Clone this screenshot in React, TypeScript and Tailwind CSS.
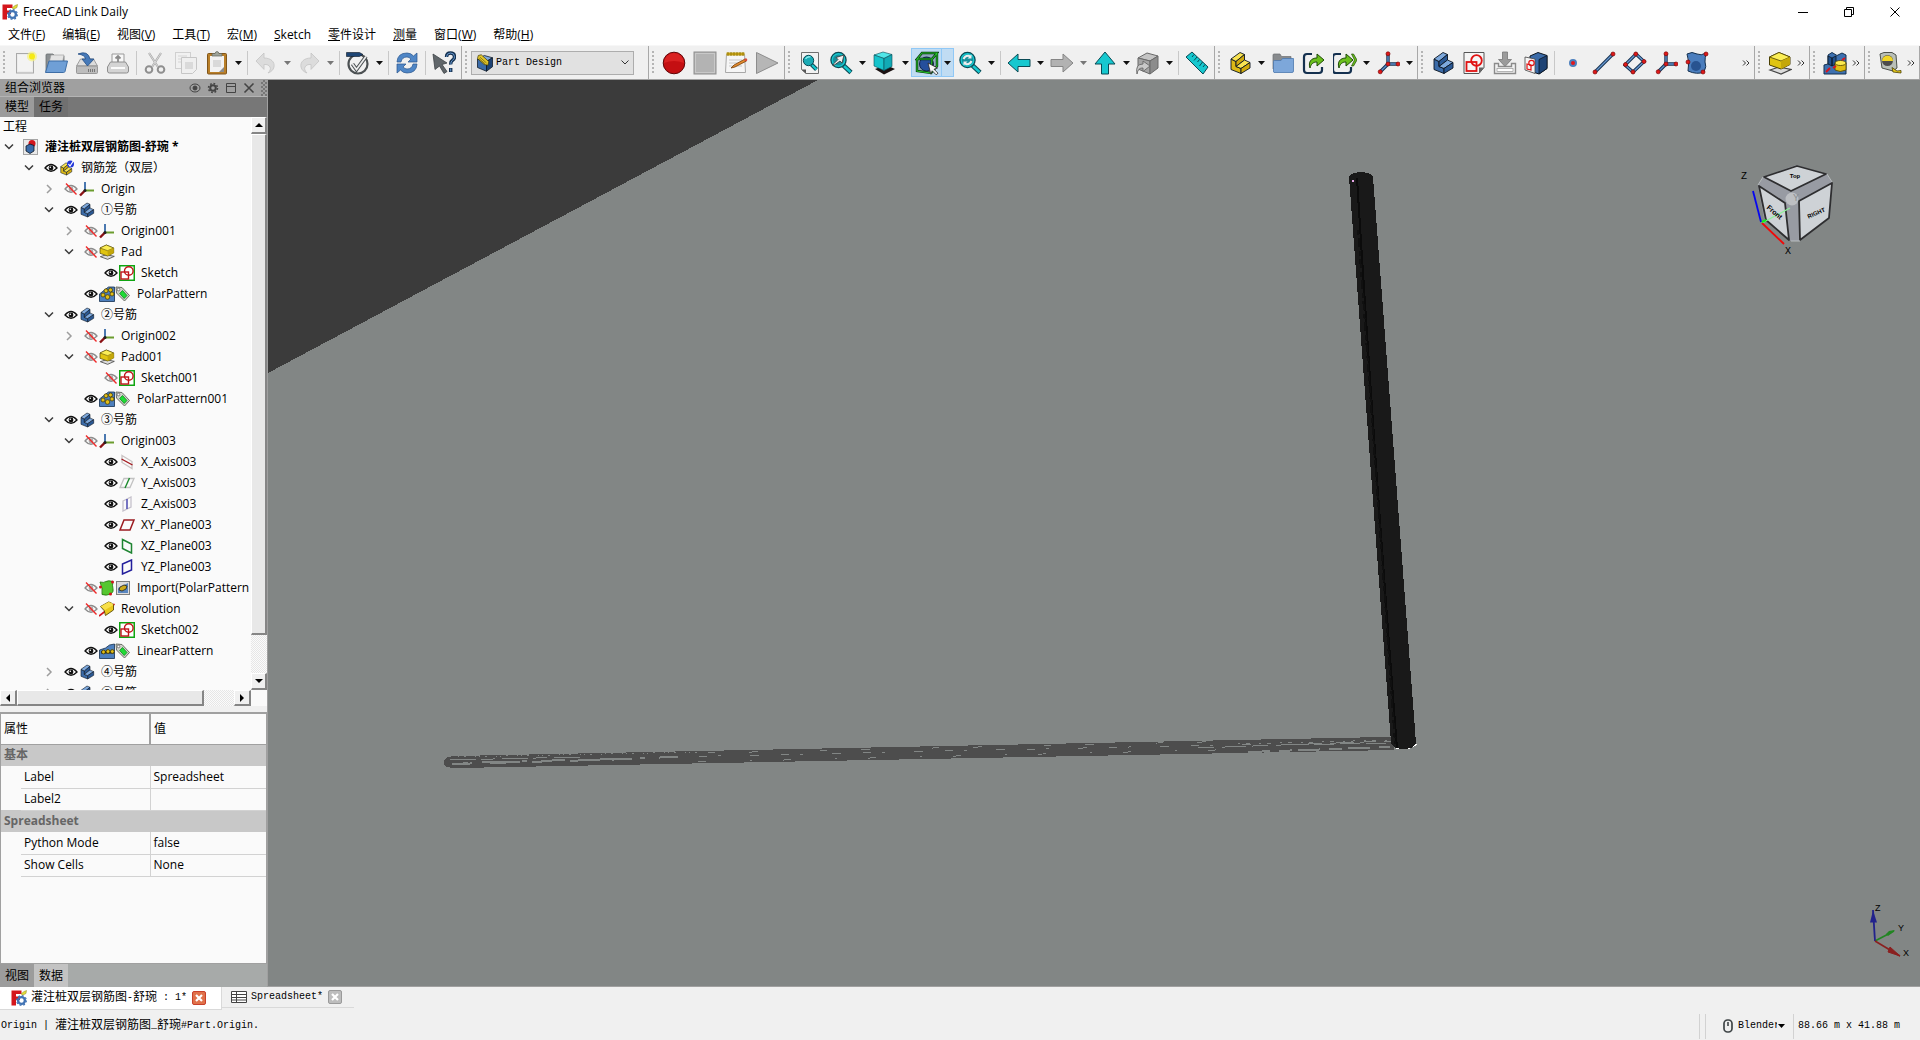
import { useState, type ReactNode } from "react";
import clsx from "clsx";

type IconName = keyof typeof ICONS;

const DARK = "#0b1521";
const NAVY = "#14304f";
const BLUE = "#3b6ba8";
const TEAL = "#16c8cf";
const TEAL_EDGE = "#0a4a55";

/* ── Toolbar icons, 24 x 24 ───────────────────────────────────────── */

const axes = (
    <>
        <path d="M12 13V3M12 13h10M12 13L4 21" stroke={NAVY} strokeWidth="3.4" fill="none" />
        <path d="M12 13V3M12 13h10M12 13L4 21" stroke="#5d8fca" strokeWidth="1.4" fill="none" />
        <g fill="#e01818" stroke="#7c0a0a" strokeWidth=".7">
            <circle cx="12" cy="2.8" r="2" />
            <circle cx="12" cy="13" r="2" />
            <circle cx="22" cy="13" r="2" />
            <circle cx="4.2" cy="20.8" r="2" />
        </g>
    </>
);

const lens = (
    <>
        <path d="M14.5 14.5l7.5 7" stroke={TEAL_EDGE} strokeWidth="4.6" />
        <path d="M15 15l6.6 6.1" stroke={TEAL} strokeWidth="2.6" />
        <circle cx="9.5" cy="9" r="7.6" fill={TEAL} stroke={TEAL_EDGE} strokeWidth="1.3" />
        <circle cx="9.5" cy="9" r="5.6" fill="#178f9c" />
    </>
);

const undo = (
    <path
        d="M2 10l8-8v5c7 0 11 4 10 9-.6 3-3 5-6 6 2-2 3-4 2-6-1-2-3-2.600-6-2.600v5z"
        fill="#dcdcdc"
        stroke="#c4c4c4"
        strokeWidth=".8"
    />
);

const partBlock = (light: string, mid: string, dark: string) => (
    <g stroke={DARK} strokeWidth=".9" strokeLinejoin="round">
        <path d="M3 8l5 2.500v5l5 2V22.500l-10-4z" fill={mid} />
        <path d="M3 8l9-6.500 4.500 2L8 10.500z" fill={light} />
        <path d="M8 10.500l8.500-7V9L8 15.500z" fill={dark} />
        <path d="M8 15.500L16.500 9l5.500 2.500-9 6z" fill={light} />
        <path d="M13 17.500l9-6V17l-9 5.500z" fill={dark} />
    </g>
);

const cube = (top: string, left: string, right: string, edge: string) => (
    <g stroke={edge} strokeWidth="1" strokeLinejoin="round">
        <path d="M2 7l9-5 11 3-8 5z" fill={top} />
        <path d="M2 7l12 3v13L2 18z" fill={left} />
        <path d="M14 10l8-5v12l-8 6z" fill={right} />
    </g>
);

const linkBox = <path d="M10 3H5Q2 3 2 6v13q0 3 3 3h12q3 0 3-3v-3" fill="none" stroke={NAVY} strokeWidth="2.200" />;

const greenArrow = (
    <path
        d="M8 17c-2-6 1-10 7-10V3l7 6-7 6v-4c-4 0-6 2-7 6z"
        fill="#6bbf1d"
        stroke="#1d4a06"
        strokeWidth="1"
        strokeLinejoin="round"
    />
);

const ICONS = {
    fileNew: (
        <>
            <rect x="3.500" y="2.500" width="17" height="19.500" fill="#ececec" stroke="#a9a9a9" />
            <path d="M5 4h14v16H5z" fill="#f3f3f3" />
            <circle cx="19" cy="5.500" r="5" fill="#f7f27a" opacity=".7" />
            <circle cx="19" cy="5.500" r="3" fill="#f6ea16" />
        </>
    ),
    open: (
        <>
            <path d="M2 21V4q0-1 1-1h6l2 2h9v14z" fill="#8b8f92" stroke="#6b6f72" strokeWidth=".8" />
            <path d="M5 12l2-8h13l-2 10z" fill="#e4e4e4" stroke="#999" strokeWidth=".6" />
            <path d="M1.500 21.500L5 10h18.500L21 20.500q-.4 1-1.500 1z" fill="#6f9fd6" stroke="#3e6ea6" />
        </>
    ),
    save: (
        <>
            <path d="M1.500 15l4-7h13l4 7z" fill="#dcdcdc" stroke="#8b8b8b" strokeWidth=".8" />
            <rect x="1.500" y="15" width="21" height="7.500" rx="1" fill="#bdbdbd" stroke="#888" strokeWidth=".8" />
            <path d="M13 19.500h8" stroke="#777" strokeDasharray="1 1" strokeWidth="3" />
            <path d="M3 3q10-4 12 5h4l-6.500 7L7 8h3.500Q10 4 3 3z" fill="#4679b8" stroke="#274f84" strokeWidth=".8" />
        </>
    ),
    print: (
        <>
            <path d="M6 12V3h12v9" fill="#f7f7f7" stroke="#9a9a9a" />
            <path d="M12 5v7M9.500 7.500L12 5l2.500 2.500" stroke="#8a8a8a" strokeWidth="1.800" fill="none" />
            <path d="M1.500 16l3-5h15l3 5v4q0 2-2 2h-17q-2 0-2-2z" fill="#d4d4d4" stroke="#8e8e8e" />
            <rect x="5" y="16" width="14" height="2" fill="#fafafa" />
        </>
    ),
    cut: (
        <>
            <path d="M6 2l9 14M18 2L9 16" stroke="#a8a8a8" strokeWidth="2.200" />
            <path d="M6 2l9 14M18 2L9 16" stroke="#e3e3e3" strokeWidth=".8" />
            <circle cx="6" cy="18.500" r="3.300" fill="none" stroke="#8f8f8f" strokeWidth="2" />
            <circle cx="18" cy="18.500" r="3.300" fill="none" stroke="#8f8f8f" strokeWidth="2" />
        </>
    ),
    copy: (
        <>
            <rect x="1.500" y="1.500" width="15" height="16" fill="#f1f1f1" stroke="#d0d0d0" />
            <path d="M4 5h9M4 8h9M4 11h9" stroke="#d5d5d5" />
            <path d="M7.500 6.500h15v12l-4 4h-11z" fill="#efefef" stroke="#c6c6c6" />
            <path d="M11 11h8v7h-8z" fill="#dadada" />
        </>
    ),
    paste: (
        <>
            <rect x="2.500" y="2.500" width="19" height="20.500" rx="1" fill="#b97f28" stroke="#80551a" />
            <path d="M5 5h14v16H5z" fill="#f2f2f2" />
            <path d="M8 9h8v7H8z" fill="#d9d9d9" />
            <path d="M19 16v5h-5z" fill="#8a8a8a" />
            <path d="M7 5V3.500q0-1 1-1h2Q10.500.500 12 .500T14 2.500h2q1 0 1 1V5z" fill="#9ea39a" stroke="#60645c" strokeWidth=".7" />
        </>
    ),
    undo,
    redo: <g transform="matrix(-1 0 0 1 24 0)">{undo}</g>,
    sketchCheck: (
        <>
            <circle cx="12" cy="13" r="9.500" fill="#f1f1f1" stroke="#4c5153" strokeWidth="2.200" />
            <path d="M6.500 13l4 5.500L20 5.500" stroke="#4a5053" strokeWidth="3.800" fill="none" />
            <path d="M6.500 13l4 5.500L20 5.500" stroke="#ededed" strokeWidth="1.700" fill="none" />
            <path d="M.500 1.500h13l3.500 2-3.500 2H.500z" fill="#1d4574" stroke={DARK} strokeWidth=".6" />
        </>
    ),
    refresh: (
        <>
            <path d="M2 11Q2.500 2 12 2q4 0 6.500 3L22 2v9h-9l3-3q-2-2-4-2-5 0-6 5z" fill="#4f86c6" stroke="#28548c" strokeWidth=".7" />
            <path d="M22 13q-.5 9-10 9-4 0-6.500-3L2 22v-9h9l-3 3q2 2 4 2 5 0 6-5z" fill="#4f86c6" stroke="#28548c" strokeWidth=".7" />
        </>
    ),
    whatsThis: (
        <>
            <path d="M1 3l14 9-5 1.500 5 7-3 2-4.500-7.500L3 18.500z" fill="#60666a" stroke="#3e4346" strokeWidth=".8" />
            <path d="M14.500 6q0-4 4-4t4 3.800q0 2.200-2 3.500t-1.700 4.200M18.700 17v4" stroke={NAVY} strokeWidth="3.400" fill="none" />
            <path d="M14.500 6q0-4 4-4t4 3.800q0 2.200-2 3.500t-1.700 4.200M18.700 17.500v3" stroke="#6b9bd1" strokeWidth="1" fill="none" />
        </>
    ),
    workbench: (
        <>
            {cube("#7fa8db", BLUE, "#1d4274", DARK)}
            <path d="M3 2l4-1 10 9-1 5-5-1L2 6z" fill="#e3c72a" stroke="#3a3206" strokeWidth=".9" />
            <path d="M5 4l9 8M4 6l8 7" stroke="#4f450c" strokeWidth=".8" />
        </>
    ),
    record: (
        <>
            <circle cx="12" cy="12" r="10.800" fill="#c40f12" stroke="#5e0608" />
            <path d="M2 12a10 10 0 0 1 20 0q-10-4-20 0z" fill="#d92222" />
        </>
    ),
    stop: (
        <>
            <rect x="1" y="1" width="22" height="22" fill="#b3b3b3" stroke="#8e8e8e" />
            <rect x="2.500" y="2.500" width="19" height="19" fill="none" stroke="#c8c8c8" />
        </>
    ),
    macroEdit: (
        <>
            <path d="M2.500 3h18l1 18.500h-20z" fill="#f6f6f6" stroke="#a8a8a8" />
            <path d="M5 9h13M5 12h13M5 15h13" stroke="#c9c9c9" />
            <path d="M2.500 1.500h18v3h-18z" fill="#c7a415" />
            <path d="M4 1v4M7 1v4M10 1v4M13 1v4M16 1v4M19 1v4" stroke="#8a6e08" strokeWidth=".8" />
            <path d="M7 17l3-3 11-6 1.500 2-11.500 6z" fill="#e48c30" stroke="#774009" strokeWidth=".8" />
            <circle cx="21.800" cy="8.800" r="1.500" fill="#d94c38" />
        </>
    ),
    play: <path d="M1.500 1.500L23 12 1.500 22.500z" fill="#b6b6b6" stroke="#8d8d8d" />,
    fitAll: (
        <>
            <path d="M3.500 1.500h17v21H8l-4.500-4z" fill="#f2f2f2" stroke="#6f6f6f" />
            <path d="M3.500 18.500l4.500 4v-4z" fill="#555" />
            <path d="M13.500 13.500l5 5" stroke={TEAL_EDGE} strokeWidth="4" />
            <path d="M14 14l4.500 4.500" stroke={TEAL} strokeWidth="2.200" />
            <circle cx="10.500" cy="9.500" r="5.200" fill="#1aaab4" stroke={TEAL_EDGE} />
            <path d="M7.500 8q2-3 5-2" stroke="#8feef0" strokeWidth="1.300" fill="none" />
        </>
    ),
    fitSelection: (
        <>
            {lens}
            <path d="M4 15l1-2.500 4-4-2-2 8-2.500-2 8-2-2z" fill="#f1f1f1" stroke="#333" strokeWidth=".8" />
        </>
    ),
    drawStyle: (
        <>
            <path d="M3 18l11-4 9 4-11 5.500z" fill="#1b1212" />
            <path d="M2 4l9-3 9 2.500-8 4z" fill="#50e6e8" stroke={TEAL_EDGE} strokeWidth=".6" />
            <path d="M2 4l10 3.500v12L2 15z" fill="#16c3cb" stroke={TEAL_EDGE} strokeWidth=".6" />
            <path d="M12 7.500l8-4v12l-8 4z" fill="#12aab5" stroke={TEAL_EDGE} strokeWidth=".6" />
        </>
    ),
    boundingBox: (
        <>
            <path d="M2 8l5-6h15v13l-6 7-14-2z" fill="#8fa9bd" />
            <circle cx="11.500" cy="13" r="7" fill="#254f9c" stroke="#10254c" />
            <path d="M2 8l5-6h15l-5 6zM2 8v12l14 2 1-14M22 2v13l-6 7" fill="none" stroke="#04300a" strokeWidth="2.400" />
            <path d="M2 8l5-6h15l-5 6zM2 8v12l14 2 1-14M22 2v13l-6 7" fill="none" stroke="#28c32c" strokeWidth="1.100" />
            <path d="M13 12l9.500 5-3.500 1.200 4 4-1.800 1.600-4-4-1.400 3.400z" fill="#f6f6f6" stroke="#222" strokeWidth=".8" />
        </>
    ),
    zoomSync: (
        <>
            {lens}
            <path d="M5.500 8q1.500-3.500 5-3.200l2.500 1M13.500 10q-1.500 3.500-5 3.200L6 12" stroke="#eee" strokeWidth="2" fill="none" />
            <path d="M13.500 3.500v4h-4zM5.500 14.500v-4h4z" fill="#eee" />
        </>
    ),
    arrowLeft: <path d="M1 12l10-9v5.500h12v7H11V21z" fill={TEAL} stroke={TEAL_EDGE} strokeLinejoin="round" />,
    arrowRight: <path d="M23 12L13 3v5.500H1v7h12V21z" fill="#b2b2b2" stroke="#858585" strokeLinejoin="round" />,
    arrowUp: <path d="M12 1l10 12h-6.500v10h-7V13H2z" fill={TEAL} stroke={TEAL_EDGE} strokeLinejoin="round" />,
    linkNav: (
        <>
            {cube("#c4c4c4", "#a5a5a5", "#8c8c8c", "#696969")}
            <path d="M1 23q-2-10 6-10v-3l7 5-7 5.500V17q-5-.5-6 6z" fill="#c8c8c8" stroke="#666" strokeWidth=".9" />
        </>
    ),
    ruler: (
        <>
            <path d="M1 6l6-5 16 15-5 7z" fill={TEAL} stroke={TEAL_EDGE} strokeLinejoin="round" />
            <path d="M9 3.500L7 6M12 6l-3 3.500M14.500 8.500l-2 2.500M17.500 11l-3 4M20 13.500l-2 2.500" stroke={TEAL_EDGE} />
        </>
    ),
    partYellow: partBlock("#f8e352", "#dcb916", "#cfa90c"),
    group: (
        <>
            <path d="M2 18V4q0-1 1-1h6l1.500 2.500H20V12z" fill="#888b8e" stroke="#6c6f71" strokeWidth=".7" />
            <path d="M2.500 21V10.500q0-1 1-1H10l1.500-2h11V20q0 1.500-1.500 1.500H3z" fill="#7da7da" stroke="#4c79ae" strokeWidth=".8" />
        </>
    ),
    link: (
        <>
            {linkBox}
            {greenArrow}
        </>
    ),
    linkAll: (
        <>
            <g transform="translate(-2 0)">
                {linkBox}
                {greenArrow}
            </g>
            <path d="M18.500 3h2l3.500 6-3.500 6h-2l3-6z" fill="#6bbf1d" stroke="#1d4a06" strokeWidth=".7" />
        </>
    ),
    axes,
    body: partBlock("#7da8dc", BLUE, "#2a5894"),
    sketch: (
        <>
            <path d="M2 1.500h20v15l-5 6H2z" fill="#f5f5f5" stroke="#555" />
            <path d="M22 16.500l-5 6v-6z" fill="#666" />
            <rect x="4.500" y="11" width="10" height="9" fill="none" stroke="#e01212" strokeWidth="1.800" />
            <circle cx="14.500" cy="9.500" r="5.300" fill="none" stroke="#e01212" strokeWidth="1.800" />
        </>
    ),
    importSketch: (
        <>
            <path d="M1.500 12.500h4v3h13v-3h4v10h-21z" fill="#f2f2f2" stroke="#8b8b8b" strokeWidth="1.400" />
            <rect x="4" y="17.500" width="16" height="3" fill="#fff" stroke="#999" strokeWidth=".7" />
            <path d="M9.500 1h5v7.500h4L12 15.500 5.500 8.500h4z" fill="#9b9b9b" stroke="#777" strokeWidth=".8" />
        </>
    ),
    mapSketch: (
        <>
            <path d="M6 5l8-3.500 9 3v13l-8 5.500-9-3z" fill={BLUE} stroke={DARK} />
            <path d="M15 8.500l8-4v13l-8 5.500z" fill="#1d4274" stroke={DARK} strokeWidth=".8" />
            <path d="M1 6l10 2v14.500L1 19z" fill="#f5f5f5" stroke="#444" strokeWidth=".8" />
            <circle cx="7.500" cy="12" r="2.700" fill="none" stroke="#e01212" strokeWidth="1.200" />
            <path d="M3 13l4 1v5l-4-1z" fill="none" stroke="#e01212" strokeWidth="1.200" />
        </>
    ),
    point: <circle cx="12" cy="12" r="3" fill="#e3171c" stroke="#4c7fbd" strokeWidth="2" />,
    line: (
        <>
            <path d="M3 21L21 3" stroke={NAVY} strokeWidth="3.200" />
            <path d="M3 21L21 3" stroke="#6797d0" strokeWidth="1.300" />
            <g fill="#e01818" stroke="#7c0a0a" strokeWidth=".7">
                <circle cx="3" cy="21" r="2" />
                <circle cx="21" cy="3" r="2" />
            </g>
        </>
    ),
    plane: (
        <>
            <path d="M2 14L13 3l8 7.500L10 21z" fill="#f1f1f1" stroke={NAVY} strokeWidth="3.200" />
            <path d="M2 14L13 3l8 7.500L10 21z" fill="none" stroke="#6797d0" strokeWidth="1.300" />
            <g fill="#e01818" stroke="#7c0a0a" strokeWidth=".7">
                <circle cx="2.500" cy="13.500" r="2" />
                <circle cx="12.800" cy="3" r="2" />
                <circle cx="21" cy="10.500" r="2" />
                <circle cx="10" cy="21" r="2" />
            </g>
        </>
    ),
    shapeBinder: (
        <>
            <path d="M2 3q5-3 10 0 4 2 9-1-1 5-1 9 2 4-1 10-7 3-16-1 2-9-1-17z" fill="#4a7dbd" stroke={NAVY} />
            <circle cx="11" cy="15" r="5" fill="#285390" />
            <g fill="#e01818" stroke="#7c0a0a" strokeWidth=".7">
                <circle cx="21" cy="3" r="2" />
                <circle cx="3" cy="11" r="2" />
                <circle cx="18" cy="21" r="2" />
            </g>
        </>
    ),
    pad: (
        <>
            <path d="M2 19l9-3 12 2.500L13 23z" fill="#dcdcdc" stroke="#444" strokeWidth="1.200" />
            <path d="M1.500 6L11 1.500l11 4.500v7.500L13 18 1.500 14z" fill="#e0c411" stroke="#4a3f03" />
            <path d="M1.500 6L11 1.500l11 4.500-9 4z" fill="#fbee55" stroke="#4a3f03" strokeWidth=".8" />
            <path d="M13 10v8l9-4.500V6z" fill="#c4a70a" />
        </>
    ),
    boolean: (
        <>
            <path d="M1 23V14l4-1V4l4-2.500 5 3 5-2.500 4 2v19z" fill="#3d70b0" stroke={NAVY} />
            <path d="M5 5l4 2v8l-4-2zM9 7l4-2v8l-4 2z" fill="#20508c" stroke={DARK} strokeWidth=".8" />
            <path d="M12 12v7q5 3 11 0v-7z" fill="#e0bf13" stroke="#4a3f03" strokeWidth=".8" />
            <ellipse cx="17.500" cy="12" rx="5.500" ry="2.500" fill="#fbea50" stroke="#4a3f03" strokeWidth=".8" />
            <path d="M3 21l4-4M10 17l3-2M19 9l3-2" stroke="#d8141c" strokeWidth="2" />
        </>
    ),
    measure: (
        <>
            <path d="M2 3l4-1.500h8L18 4l1 13-4 3-11-3z" fill="#b9bfb8" stroke="#4b504a" />
            <circle cx="9.500" cy="9.500" r="5.500" fill="#4c4c4c" />
            <path d="M4 10a5.500 5.500 0 0 1 11 0z" fill="#f0d526" />
            <path d="M14 16.500l5 3.500 4-.500v2.500l-8-1z" fill="#e9cc1c" stroke="#4a3f03" strokeWidth=".8" />
        </>
    ),
};

/* ── Tree icons, 16 x 16 ──────────────────────────────────────────── */

const small = (node: ReactNode) => <g transform="scale(.667)">{node}</g>;

const TREE_ICONS = {
    document: (
        <>
            <rect x=".500" y=".500" width="14" height="15" fill="#e9e9e9" stroke="#a5a5a5" />
            <circle cx="9" cy="4.500" r="3.500" fill="#d3161d" />
            <path d="M3 7l4-2 4 1.500v5.500L7 14.500 3 12z" fill="#3b6ba8" stroke={DARK} strokeWidth=".8" />
        </>
    ),
    assembly: (
        <>
            <g transform="translate(0 2) scale(.58)">{partBlock("#f8e352", "#dcb916", "#cfa90c")}</g>
            <circle cx="11.500" cy="4" r="3.500" fill="#2136d8" />
            <path d="M9.500 4l1.500 2 4-6" fill="none" stroke="#fff" strokeWidth="1.200" />
        </>
    ),
    origin: (
        <>
            <path d="M6 9.500V1" stroke="#4a78b0" strokeWidth="2" />
            <path d="M6 9.500h9" stroke="#6b9c2e" strokeWidth="2" />
            <path d="M6 9.500l-5 5" stroke="#8a1114" strokeWidth="2.400" />
            <circle cx="6" cy="9.500" r="1.500" fill="#222" />
        </>
    ),
    body: small(ICONS.body),
    pad: small(ICONS.pad),
    sketch: (
        <>
            <rect x=".750" y=".750" width="14.500" height="14.500" fill="#fff" stroke="#10a512" strokeWidth="1.500" />
            <rect x="2" y="7" width="7.500" height="7" fill="none" stroke="#c1151a" strokeWidth="1.400" />
            <circle cx="9.800" cy="6" r="4.300" fill="none" stroke="#c1151a" strokeWidth="1.400" />
        </>
    ),
    polar: (
        <>
            <path d="M.500 15.500V8l5-4 4-3h6v14.500z" fill="#4d7fbd" stroke={NAVY} strokeWidth=".8" />
            <g fill="#e2bf17" stroke="#3c3303" strokeWidth=".7">
                <circle cx="4" cy="9" r="2" />
                <circle cx="7" cy="4.800" r="2" />
                <circle cx="11.500" cy="4" r="2" />
                <circle cx="13" cy="8" r="2" />
                <circle cx="8.500" cy="11" r="2.300" />
            </g>
        </>
    ),
    linear: (
        <>
            <path d="M.500 15.500V7l6-2 4-3 5-1v14.500z" fill="#4d7fbd" stroke={NAVY} strokeWidth=".8" />
            <path d="M2 8h13v2.500H2z" fill="#222" />
            <g fill="#e2bf17" stroke="#3c3303" strokeWidth=".8">
                <circle cx="4.500" cy="9" r="1.900" />
                <circle cx="9" cy="8.500" r="1.900" />
                <circle cx="13.300" cy="8.500" r="1.900" />
            </g>
        </>
    ),
    tag: (
        <>
            <path d="M1 1l6 .500 7.500 8-5 5.500L1.500 7z" fill="#cfd1c9" stroke="#6b6e65" />
            <circle cx="3.500" cy="3.500" r="1.300" fill="#fff" stroke="#555" strokeWidth=".7" />
            <path d="M7.500 4.500l4.500 5-2.800 3-4.500-5z" fill="#1fdb35" stroke="#0a8a19" strokeWidth=".8" />
        </>
    ),
    xAxis: (
        <>
            <path d="M3 1.500l10 6v7l-10-6z" fill="none" stroke="#c9c2c2" strokeWidth="1.300" />
            <path d="M2.500 5l11 6" stroke="#a2171c" strokeWidth="1.400" />
        </>
    ),
    yAxis: (
        <>
            <path d="M5 3.500h10l-4 9H1z" fill="none" stroke="#c2c2c2" strokeWidth="1.300" />
            <path d="M10.500 3l-4.500 10" stroke="#1b8a2c" strokeWidth="1.400" />
        </>
    ),
    zAxis: (
        <>
            <path d="M4 5l8-4v10l-8 4z" fill="none" stroke="#c6c2cc" strokeWidth="1.300" />
            <path d="M8 3v10" stroke="#5654b4" strokeWidth="1.600" />
        </>
    ),
    xyPlane: <path d="M5 3h10l-4 10H1z" fill="none" stroke="#9b1b20" strokeWidth="1.500" />,
    xzPlane: <path d="M3.500 1.500l9 4.500v9l-9-4.500z" fill="none" stroke="#1e8431" strokeWidth="1.500" />,
    yzPlane: <path d="M3.500 5l9-4v10l-9 4z" fill="none" stroke="#231f9c" strokeWidth="1.500" />,
    importShape: (
        <>
            <path d="M1 2q4 1 6-.500T14 1.500q-1 4 0 7 1 3-2 5.500-5 2-9 .500 1-6-2-12.500z" fill="#55c72f" stroke="#1d6e0b" strokeWidth=".8" />
            <g fill="#d3161d">
                <circle cx="13.500" cy="2" r="1.500" />
                <circle cx="1.500" cy="7" r="1.500" />
                <circle cx="11.500" cy="14" r="1.500" />
            </g>
        </>
    ),
    thumb: (
        <>
            <rect x="1.500" y="1.500" width="13" height="13" fill="#dcdcdc" stroke="#7e7e7e" />
            <path d="M3 13V8l10-5v10z" fill="#5a86bf" />
            <path d="M4 10l1-3 4-2 3 1-1 3-4 2z" fill="#cba91a" stroke="#222" strokeWidth=".8" />
        </>
    ),
    revolution: (
        <>
            <path d="M0 15L15.500 3" stroke="#d3161d" strokeWidth="1.600" />
            <path d="M1.500 5.500l8-4.500q3 0 5 3v5l-8 5.500q0-5-5-9z" fill="#e9c81b" stroke="#5a4b04" strokeWidth=".9" />
            <path d="M1.500 5.500l8-4.500q3 0 5 3L6 9Q4 6.500 1.500 5.500z" fill="#f8e04a" />
        </>
    ),
};

type TreeIconName = keyof typeof TREE_ICONS;

function Icon({ name, className }: { name: IconName; className?: string }) {
    return (
        <svg viewBox="0 0 24 24" className={clsx("size-6 shrink-0", className)} aria-hidden="true">
            {ICONS[name]}
        </svg>
    );
}

function Logo() {
    return (
        <svg viewBox="0 0 16 16" className="size-4 shrink-0" aria-hidden="true">
            <path d="M.5.5h10v3.500H5v2.500h4v3.500H5v5.500H.5z" fill="#d4161c" />
            <circle cx="10.500" cy="10.500" r="3.400" fill="none" stroke="#4173b4" strokeWidth="2.400" />
            <circle cx="10.500" cy="10.500" r="4.900" fill="none" stroke="#4173b4" strokeWidth="1.200" strokeDasharray="1.900 1.900" />
            <path d="M10 4l3-2.500 2.500-1-.5 3-3 1.500z" fill="#e3dc3a" stroke="#8f8a1c" strokeWidth=".5" />
        </svg>
    );
}

/* ── Data ─────────────────────────────────────────────────────────── */

const MENUS: { label: string; mnemonic?: string }[] = [
    { label: "文件", mnemonic: "F" },
    { label: "编辑", mnemonic: "E" },
    { label: "视图", mnemonic: "V" },
    { label: "工具", mnemonic: "T" },
    { label: "宏", mnemonic: "M" },
    { label: "Sketch" },
    { label: "零件设计" },
    { label: "测量" },
    { label: "窗口", mnemonic: "W" },
    { label: "帮助", mnemonic: "H" },
];

type TreeItem = {
    depth: number;
    label: string;
    icons: TreeIconName[];
    eye?: "on" | "off";
    open?: boolean;
    bold?: boolean;
};

const TREE: TreeItem[] = [
    { depth: 0, label: "灌注桩双层钢筋图-舒琬 *", icons: ["document"], open: true, bold: true },
    { depth: 1, label: "钢筋笼（双层）", icons: ["assembly"], eye: "on", open: true },
    { depth: 2, label: "Origin", icons: ["origin"], eye: "off", open: false },
    { depth: 2, label: "①号筋", icons: ["body"], eye: "on", open: true },
    { depth: 3, label: "Origin001", icons: ["origin"], eye: "off", open: false },
    { depth: 3, label: "Pad", icons: ["pad"], eye: "off", open: true },
    { depth: 4, label: "Sketch", icons: ["sketch"], eye: "on" },
    { depth: 3, label: "PolarPattern", icons: ["polar", "tag"], eye: "on" },
    { depth: 2, label: "②号筋", icons: ["body"], eye: "on", open: true },
    { depth: 3, label: "Origin002", icons: ["origin"], eye: "off", open: false },
    { depth: 3, label: "Pad001", icons: ["pad"], eye: "off", open: true },
    { depth: 4, label: "Sketch001", icons: ["sketch"], eye: "off" },
    { depth: 3, label: "PolarPattern001", icons: ["polar", "tag"], eye: "on" },
    { depth: 2, label: "③号筋", icons: ["body"], eye: "on", open: true },
    { depth: 3, label: "Origin003", icons: ["origin"], eye: "off", open: true },
    { depth: 4, label: "X_Axis003", icons: ["xAxis"], eye: "on" },
    { depth: 4, label: "Y_Axis003", icons: ["yAxis"], eye: "on" },
    { depth: 4, label: "Z_Axis003", icons: ["zAxis"], eye: "on" },
    { depth: 4, label: "XY_Plane003", icons: ["xyPlane"], eye: "on" },
    { depth: 4, label: "XZ_Plane003", icons: ["xzPlane"], eye: "on" },
    { depth: 4, label: "YZ_Plane003", icons: ["yzPlane"], eye: "on" },
    { depth: 3, label: "Import(PolarPattern", icons: ["importShape", "thumb"], eye: "off" },
    { depth: 3, label: "Revolution", icons: ["revolution"], eye: "off", open: true },
    { depth: 4, label: "Sketch002", icons: ["sketch"], eye: "on" },
    { depth: 3, label: "LinearPattern", icons: ["linear", "tag"], eye: "on" },
    { depth: 2, label: "④号筋", icons: ["body"], eye: "on", open: false },
    { depth: 2, label: "⑤号筋", icons: ["body"], eye: "on", open: false },
];

const INDENT = ["pl-0", "pl-5", "pl-10", "pl-15", "pl-20"];

const PROPERTIES = [
    { group: "基本", rows: [["Label", "Spreadsheet"], ["Label2", ""]] },
    { group: "Spreadsheet", rows: [["Python Mode", "false"], ["Show Cells", "None"]] },
];

/* ── Toolbar ──────────────────────────────────────────────────────── */

function Toolbar({ children, className }: { children: ReactNode; className?: string }) {
    return (
        <div role="toolbar" className={clsx("flex items-center border-r border-[#a8a8a8] pr-0.5", className)}>
            <span className="mr-1 ml-[3px] h-6 w-0.5 shrink-0 bg-[linear-gradient(#b4b4b4_50%,transparent_50%)] bg-size-[2px_4px]" />
            {children}
        </div>
    );
}

function Tool({
    name,
    menu,
    faded,
    active,
}: {
    name: IconName;
    menu?: boolean;
    faded?: boolean;
    active?: boolean;
}) {
    return (
        <>
            <button
                type="button"
                aria-label={name}
                className={clsx(
                    "flex h-[29px] w-[31px] shrink-0 items-center justify-center",
                    active && "border border-[#90c8f6] bg-[#c0dcf3]",
                )}
            >
                <Icon name={name} />
            </button>
            {menu ? (
                <button
                    type="button"
                    aria-label={`${name} menu`}
                    className={clsx(
                        "flex h-[29px] w-3 shrink-0 items-center justify-center",
                        active && "border border-l-0 border-[#90c8f6] bg-[#c0dcf3]",
                    )}
                >
                    <Caret className={faded ? "fill-[#777]" : "fill-[#111]"} />
                </button>
            ) : null}
        </>
    );
}

function Caret({ className }: { className?: string }) {
    return (
        <svg viewBox="0 0 7 4" className={clsx("h-1 w-[7px] shrink-0", className)} aria-hidden="true">
            <path d="M0 0h7L3.500 4z" />
        </svg>
    );
}

function Divider() {
    return <span className="mx-0.5 h-6 w-0.5 shrink-0 border-r border-[#c8c8c8]" />;
}

function More() {
    return (
        <button type="button" aria-label="more" className="flex h-[29px] w-3 shrink-0 items-center justify-center">
            <svg viewBox="0 0 8 6" className="h-1.5 w-2" fill="none" stroke="#333" aria-hidden="true">
                <path d="M1 .500L3.500 3 1 5.500M4.500.500L7 3 4.500 5.500" />
            </svg>
        </button>
    );
}

function Toolbars() {
    return (
        <div className="flex h-[35px] shrink-0 border-t border-b border-t-[#f7f7f7] border-b-[#a0a0a0] bg-[#f0f0f0]">
            <Toolbar>
                <Tool name="fileNew" />
                <Tool name="open" />
                <Tool name="save" />
                <Tool name="print" />
                <Divider />
                <Tool name="cut" />
                <Tool name="copy" />
                <Tool name="paste" menu />
                <Divider />
                <Tool name="undo" menu faded />
                <Tool name="redo" menu faded />
                <Divider />
                <Tool name="sketchCheck" menu />
                <Divider />
                <Tool name="refresh" />
                <Divider />
                <Tool name="whatsThis" />
            </Toolbar>
            <Toolbar>
                <label className="mr-3 flex h-6 w-[163px] items-center border border-[#adadad] bg-[#e1e1e1] pl-1">
                    <Icon name="workbench" className="size-[18px]" />
                    <select
                        aria-label="Workbench"
                        className="ml-0.5 min-w-0 flex-1 appearance-none bg-transparent font-['Liberation_Mono','Noto_Sans_CJK_SC',monospace] text-[10px] outline-none"
                    >
                        <option>Part Design</option>
                    </select>
                    <svg viewBox="0 0 8 5" className="mr-1 h-[5px] w-2" fill="none" stroke="#333" aria-hidden="true">
                        <path d="M.500.500L4 4 7.500.500" />
                    </svg>
                </label>
            </Toolbar>
            <Toolbar>
                <Tool name="record" />
                <Tool name="stop" />
                <Tool name="macroEdit" />
                <Tool name="play" />
            </Toolbar>
            <Toolbar>
                <Tool name="fitAll" />
                <Tool name="fitSelection" menu />
                <Tool name="drawStyle" menu />
                <Tool name="boundingBox" menu active />
                <Tool name="zoomSync" menu />
                <Divider />
                <Tool name="arrowLeft" menu />
                <Tool name="arrowRight" menu faded />
                <Tool name="arrowUp" menu />
                <Tool name="linkNav" menu />
                <Divider />
                <Tool name="ruler" />
            </Toolbar>
            <Toolbar>
                <Tool name="partYellow" menu />
                <Tool name="group" />
                <Tool name="link" />
                <Tool name="linkAll" menu />
                <Tool name="axes" menu />
            </Toolbar>
            <Toolbar className="min-w-0 flex-1">
                <Tool name="body" />
                <Tool name="sketch" />
                <Tool name="importSketch" />
                <Tool name="mapSketch" />
                <Divider />
                <Tool name="point" />
                <Tool name="line" />
                <Tool name="plane" />
                <Tool name="axes" />
                <Tool name="shapeBinder" />
                <span className="flex-1" />
                <More />
            </Toolbar>
            <Toolbar>
                <Tool name="pad" />
                <More />
            </Toolbar>
            <Toolbar>
                <Tool name="boolean" />
                <More />
            </Toolbar>
            <Toolbar>
                <Tool name="measure" />
                <More />
            </Toolbar>
        </div>
    );
}

/* ── Side panel ───────────────────────────────────────────────────── */

function Eye({ on }: { on: boolean }) {
    return (
        <svg viewBox="0 0 14 12" className="h-3 w-3.5 shrink-0" fill="none" aria-hidden="true">
            <path d="M1 6q6-7 12 0-6 6.500-12 0z" stroke={on ? "#111" : "#8c8c8c"} strokeWidth="1.300" />
            <circle cx="7" cy="6" r="2.400" fill={on ? "#111" : "#aaa"} />
            {on ? <circle cx="6.300" cy="5.300" r=".8" fill="#fff" /> : <path d="M2 .500L12.500 11.500" stroke="#f02a2a" strokeWidth="1.400" />}
        </svg>
    );
}

function TreeRow({ item }: { item: TreeItem }) {
    return (
        <li className={clsx("flex h-[21px] items-center whitespace-nowrap", INDENT[item.depth])}>
            {item.open === undefined ? (
                <span className="w-[18px] shrink-0" />
            ) : (
                <button type="button" aria-label={item.label} className="flex w-[18px] shrink-0 justify-center">
                    <svg viewBox="0 0 10 10" className="size-2.5" fill="none" strokeWidth="1.500" aria-hidden="true">
                        {item.open ? (
                            <path d="M1 2.500l4 4 4-4" stroke="#3a3a3a" />
                        ) : (
                            <path d="M3 1l4 4-4 4" stroke="#9d9d9d" />
                        )}
                    </svg>
                </button>
            )}
            {item.eye ? (
                <span className="mr-px ml-1.5">
                    <Eye on={item.eye === "on"} />
                </span>
            ) : (
                <span className="w-[5px] shrink-0" />
            )}
            {item.icons.map((name) => (
                <svg key={name} viewBox="0 0 16 16" className="size-4 shrink-0" aria-hidden="true">
                    {TREE_ICONS[name]}
                </svg>
            ))}
            <span className={clsx("ml-1.5", item.bold && "font-bold")}>{item.label}</span>
        </li>
    );
}

const BEVEL =
    "flex shrink-0 items-center justify-center border-t border-l border-r-2 border-b-2 border-t-white border-l-white border-r-[#858585] border-b-[#858585]";
const TRACK = "bg-[repeating-conic-gradient(#e6e6e6_0_25%,#fbfbfb_0_50%)] bg-size-[2px_2px]";

function ScrollArrow({ label, path, className }: { label: string; path: string; className: string }) {
    return (
        <button type="button" aria-label={label} className={clsx(BEVEL, "bg-[#f0f0f0]", className)}>
            <svg viewBox="0 0 8 8" className="size-2" aria-hidden="true">
                <path d={path} />
            </svg>
        </button>
    );
}

function ModelTree() {
    return (
        <div className="flex min-h-0 flex-1 flex-col bg-[#fafafa]">
            <div className="flex min-h-0 flex-1">
                <div className="min-w-0 flex-1 overflow-hidden">
                    <div className="h-[19px] pl-[3px] leading-[19px]">工程</div>
                    <ul>
                        {TREE.map((item) => (
                            <TreeRow key={item.label} item={item} />
                        ))}
                    </ul>
                </div>
                <div className="flex w-4 flex-col">
                    <ScrollArrow label="up" path="M0 6h8L4 2z" className="h-[17px]" />
                    <div className={clsx("flex flex-1 flex-col", TRACK)}>
                        <div className={clsx(BEVEL, "h-[93%] bg-[#e8e8e8]")} />
                    </div>
                    <ScrollArrow label="down" path="M0 2h8L4 6z" className="h-[17px]" />
                </div>
            </div>
            <div className="flex h-4">
                <ScrollArrow label="left" path="M6 0v8L2 4z" className="w-[17px]" />
                <div className={clsx("flex flex-1", TRACK)}>
                    <div className={clsx(BEVEL, "w-[86%] bg-[#e8e8e8]")} />
                </div>
                <ScrollArrow label="right" path="M2 0v8l4-4z" className="w-[17px]" />
                <span className="w-4" />
            </div>
        </div>
    );
}

function PropertyTable() {
    return (
        <div className="h-[252px] shrink-0 border border-t-2 border-[#a0a0a0] bg-[#fafafa]">
            <table className="w-full table-fixed border-collapse text-left">
                <colgroup>
                    <col className="w-5" />
                    <col className="w-[129px]" />
                    <col />
                </colgroup>
                <thead>
                    <tr className="h-[30px] border-b border-[#a0a0a0]">
                        <th colSpan={2} className="border-r-2 border-[#a0a0a0] pl-[3px] font-normal">
                            属性
                        </th>
                        <th className="pl-[3px] font-normal">值</th>
                    </tr>
                </thead>
                {PROPERTIES.map(({ group, rows }) => (
                    <tbody key={group}>
                        <tr className="h-[22px] bg-[#c8c8c8]">
                            <th colSpan={3} className="pl-[3px] font-bold text-[#666]">
                                {group}
                            </th>
                        </tr>
                        {rows.map(([name, value]) => (
                            <tr key={name} className="h-[22px]">
                                <td />
                                <td className="border-r border-b border-[#d2d2d2] pl-[3px]">{name}</td>
                                <td className="border-b border-[#d2d2d2] pl-[3px]">{value}</td>
                            </tr>
                        ))}
                    </tbody>
                ))}
            </table>
        </div>
    );
}

function SidePanel() {
    const [tab, setTab] = useState("模型");
    const [view, setView] = useState("数据");

    return (
        <aside className="flex w-[268px] shrink-0 flex-col bg-[#a0a0a0] pr-px">
            <header className="flex h-4 shrink-0 items-center bg-[#a0a0a0] pl-[5px]">
                <h2 className="flex-1 leading-4">组合浏览器</h2>
                <div className="flex items-center gap-1.5 text-[#444]">
                    <button type="button" aria-label="visibility">
                        <svg viewBox="0 0 12 12" className="size-3" fill="none" stroke="currentColor" aria-hidden="true">
                            <ellipse cx="6" cy="6" rx="5" ry="4" />
                            <circle cx="6" cy="6" r="2" fill="currentColor" />
                        </svg>
                    </button>
                    <button type="button" aria-label="settings">
                        <svg viewBox="0 0 12 12" className="size-3" fill="none" stroke="currentColor" aria-hidden="true">
                            <circle cx="6" cy="6" r="2.800" strokeWidth="2" />
                            <circle cx="6" cy="6" r="4.500" strokeWidth="1.500" strokeDasharray="1.760" />
                        </svg>
                    </button>
                    <button type="button" aria-label="float">
                        <svg viewBox="0 0 12 12" className="size-3" fill="none" stroke="currentColor" aria-hidden="true">
                            <path d="M1.500 1.500h9v9h-9zM1.500 4.500h9" />
                        </svg>
                    </button>
                    <button type="button" aria-label="close">
                        <svg viewBox="0 0 12 12" className="size-3" stroke="currentColor" strokeWidth="1.600" aria-hidden="true">
                            <path d="M1.500 1.500l9 9M10.500 1.500l-9 9" />
                        </svg>
                    </button>
                    <span className="h-4 w-1.5 bg-[repeating-conic-gradient(#777_0_25%,#a0a0a0_0_50%)] bg-size-[4px_4px]" />
                </div>
            </header>
            <div className="flex h-[21px] shrink-0 border-t border-[#b4b4b4] bg-[#777]">
                {["模型", "任务"].map((name) => (
                    <button
                        key={name}
                        type="button"
                        onClick={() => setTab(name)}
                        className={clsx("w-[34px] leading-5", tab === name ? "bg-[#9b9b9b]" : "bg-[#707070]")}
                    >
                        {name}
                    </button>
                ))}
            </div>
            <ModelTree />
            <div className="h-1.5 shrink-0 bg-[#f0f0f0]" />
            <PropertyTable />
            <div className="flex h-[23px] shrink-0 bg-[#a7aaa9]">
                {["视图", "数据"].map((name) => (
                    <button
                        key={name}
                        type="button"
                        onClick={() => setView(name)}
                        className={clsx("w-[34px] leading-[22px]", view === name ? "bg-[#c3c3c3]" : "bg-[#9c9c9c]")}
                    >
                        {name}
                    </button>
                ))}
            </div>
        </aside>
    );
}

/* ── 3D view ──────────────────────────────────────────────────────── */

function NavCube() {
    return (
        <svg viewBox="0 0 260 130" className="absolute top-[60px] right-0 h-[130px] w-[260px]" aria-hidden="true">
            <path d="M103 37l33-12 31 9 5 9-2 35-30 23h-10l-26-22-6-33z" fill="#989ba3" />
            <g fill="#ced2d6" stroke="#2e2e30" strokeWidth="1.800" strokeLinejoin="round">
                <path d="M104 37l33-11 29 8-35 17z" />
                <path d="M99 46l26 17 4 37-23-20z" />
                <path d="M139 61l33-18-3 35-29 22z" />
            </g>
            <path d="M98 45l5-8M167 34l5 8M131 101h9" stroke="#b9bdc0" strokeWidth="1" />
            <circle cx="132" cy="59" r="6.500" fill="#c3c6c9" opacity=".85" />
            <path d="M102 83l28-15" stroke="#8ef09a" strokeWidth="1.300" />
            <path d="M101 82L93 51" stroke="#0606f0" strokeWidth="1.800" />
            <path d="M102 83l22 21" stroke="#f00808" strokeWidth="1.800" />
            <path d="M102 82l4-2" stroke="#0cf01a" strokeWidth="2" />
            <g className="font-['Liberation_Mono',monospace] text-[10px]">
                <text x="81" y="39">Z</text>
                <text x="125" y="114">X</text>
                <text x="133" y="61" fill="#8b8e90">Y</text>
            </g>
            <g className="font-['Liberation_Sans',sans-serif] text-[7px] font-bold" textAnchor="middle">
                <text x="135" y="38" className="text-[6px]">Top</text>
                <text transform="translate(113 74) rotate(40)">Front</text>
                <text transform="translate(157 75) rotate(-24)" className="text-[6px]">RIGHT</text>
            </g>
        </svg>
    );
}

function AxisCross() {
    return (
        <svg viewBox="0 0 60 66" className="absolute right-0 bottom-5 h-[66px] w-[60px]" aria-hidden="true">
            <path d="M15 41l19-10" stroke="#228522" strokeWidth="1.600" />
            <path d="M26 34l3-3 6-1-3 3-4 3z" fill="#228522" />
            <path d="M15 41L13 10" stroke="#22228c" strokeWidth="1.800" />
            <path d="M10 22.500l3-12 4 12z" fill="#22228c" />
            <path d="M15 41l25 15" stroke="#8a2020" strokeWidth="1.600" />
            <path d="M30 47l10 9-12-4z" fill="#8a2020" stroke="#8a2020" />
            <g className="font-['Liberation_Sans',sans-serif] text-[9px]">
                <text x="15" y="11">Z</text>
                <text x="38" y="31">Y</text>
                <text x="43" y="56">X</text>
            </g>
        </svg>
    );
}

function Viewport() {
    return (
        <main className="relative min-w-0 flex-1 overflow-hidden border-b border-[#a0a0a0] bg-[#828685]">
            <svg
                viewBox="0 0 1652 906"
                preserveAspectRatio="xMidYMid slice"
                shapeRendering="crispEdges"
                className="absolute inset-0 size-full"
                aria-hidden="true"
            >
                <path d="M0 0h550L0 293z" fill="#3b3b3b" />
                <path d="M176 680q3-4 12-4L1116 657h10v13L190 688q-12 0-14-3z" fill="#4d4d4d" />
                <g stroke="#828685" fill="none">
                    <path d="M182 680l130-3" strokeDasharray="26 5 14 7" />
                    <path d="M184 684l180-5" strokeWidth="2" strokeDasharray="20 18 30 12" />
                    <path d="M195 683l215-6" strokeWidth="2" strokeDasharray="5 14 24 16" />
                    <path d="M190 677l240-5" strokeDasharray="1 5 2 9 1 3" />
                    <path d="M400 677l600-13" strokeDasharray="9 22 8 11 3 29" />
                    <path d="M430 682l560-13" strokeDasharray="8 44 2 31" />
                    <path d="M440 673l540-12" strokeDasharray="7 34 9 62" />
                    <path d="M930 668l194-7" strokeDasharray="16 8 24 6" />
                    <path d="M970 664l154-4" strokeDasharray="2 6 4 9" />
                    <path d="M980 672l142-5" strokeWidth="2" strokeDasharray="22 9 13 6" />
                    <path d="M1020 665l104-2" strokeDasharray="20 6" />
                </g>
                <path d="M1128 667h13l7-4" stroke="#fff" strokeWidth="4" fill="none" />
                <path d="M1081 97q1-4 12-5 11 1 12 5l43 566q-2 6-13 6-9 0-12-6z" fill="#191919" />
                <path d="M1089 98q16 260 40 570" stroke="#0b0b0b" strokeWidth="2" fill="none" />
                <path d="M1090 150q18 240 37 514" stroke="#101010" strokeWidth="2" strokeDasharray="5 3 9 4" fill="none" />
                <path d="M1084 100h2v2h-2z" fill="#e9a8e9" />
            </svg>
            <NavCube />
            <AxisCross />
        </main>
    );
}

/* ── Window ───────────────────────────────────────────────────────── */

function TitleBar() {
    return (
        <header className="flex h-6 shrink-0 items-center bg-white pr-0.5 pl-0.5">
            <Logo />
            <h1 className="ml-[5px] flex-1">FreeCAD Link Daily</h1>
            <div className="flex">
                {[
                    ["minimize", "M0 5.500h10"],
                    ["restore", "M.500 2.500h7v7h-7zM2.500 2.500v-2h7v7h-2"],
                    ["close", "M.500.500l9 9M9.500.500l-9 9"],
                ].map(([label, d]) => (
                    <button key={label} type="button" aria-label={label} className="flex h-5 w-[46px] items-center justify-center">
                        <svg viewBox="0 0 10 10" className="size-2.5" fill="none" stroke="#000" aria-hidden="true">
                            <path d={d} />
                        </svg>
                    </button>
                ))}
            </div>
        </header>
    );
}

function MenuBar() {
    return (
        <nav className="flex h-[21px] shrink-0 items-center gap-px bg-white">
            {MENUS.map(({ label, mnemonic }) => (
                <button key={label} type="button" className="px-2">
                    {mnemonic ? (
                        <>
                            {label}(<u>{mnemonic}</u>)
                        </>
                    ) : (
                        <>
                            <u>{label[0]}</u>
                            {label.slice(1)}
                        </>
                    )}
                </button>
            ))}
        </nav>
    );
}

function CloseTab({ active }: { active?: boolean }) {
    return (
        <button type="button" aria-label="close tab" className="size-3.5">
            <svg viewBox="0 0 14 14" className="size-3.5" aria-hidden="true">
                <rect
                    x=".500"
                    y=".500"
                    width="13"
                    height="13"
                    rx="1.500"
                    fill={active ? "#e0714a" : "#bdbdbd"}
                    stroke={active ? "#c8402a" : "#9a9a9a"}
                />
                <path d="M4 4l6 6M10 4l-6 6" stroke="#fff" strokeWidth="2.200" />
            </svg>
        </button>
    );
}

function DocumentTabs() {
    return (
        <div className="flex h-[23px] shrink-0 font-['Liberation_Mono','Noto_Sans_CJK_SC',monospace] text-[10px]">
            <div className="flex w-[222px] items-center border-r border-b border-[#d9d9d9] bg-white pl-[11px]">
                <Logo />
                <button type="button" className="mr-[5px] ml-1 flex items-center whitespace-pre">
                    <span className="text-xs">灌注桩双层钢筋图</span>-<span className="text-xs">舒琬</span>
                    {" : 1*"}
                </button>
                <CloseTab active />
            </div>
            <div className="mb-0.5 flex w-[132px] items-center border-b border-[#d9d9d9] pl-[9px]">
                <svg viewBox="0 0 16 14" className="h-3.5 w-4" aria-hidden="true">
                    <path d="M.500 1.500h15v11H.500z" fill="#fff" stroke="#444" />
                    <path d="M.500 4.500h15M.500 7.500h15M.500 10h15M5.500 1v12" stroke="#444" />
                </svg>
                <button type="button" className="mr-[5px] ml-1">
                    Spreadsheet*
                </button>
                <CloseTab />
            </div>
        </div>
    );
}

function StatusBar() {
    return (
        <footer className="flex h-[30px] shrink-0 items-center pt-0.5 font-['Liberation_Mono','Noto_Sans_CJK_SC',monospace] text-[10px]">
            <p className="ml-px flex flex-1 items-center whitespace-pre">
                {"Origin | "}
                <span className="text-xs">灌注桩双层钢筋图</span>_<span className="text-xs">舒琬</span>#Part.Origin.
            </p>
            <span className="h-[25px] w-[7px] border-x border-[#d2d2d2]" />
            <button type="button" className="ml-[17px] flex items-center">
                <svg viewBox="0 0 10 14" className="mr-[5px] h-3.5 w-2.5" aria-hidden="true">
                    <rect x="1" y="1" width="8" height="12" rx="3.500" fill="#eee" stroke="#3f4547" strokeWidth="1.700" />
                    <path d="M5 3v4" stroke="#3f4547" strokeWidth="1.600" />
                </svg>
                <span className="w-[39px] overflow-hidden text-left">Blender</span>
                <Caret className="ml-px fill-black" />
            </button>
            <span className="ml-2 h-[25px] border-l border-[#d2d2d2]" />
            <span className="mr-5 ml-1">88.66 m x 41.88 m</span>
        </footer>
    );
}

export default function App() {
    return (
        <div className="flex h-screen flex-col overflow-hidden bg-[#f0f0f0] font-['Open_Sans','Noto_Sans_CJK_SC',sans-serif] text-xs text-black">
            <TitleBar />
            <MenuBar />
            <Toolbars />
            <div className="flex min-h-0 flex-1">
                <SidePanel />
                <Viewport />
            </div>
            <DocumentTabs />
            <StatusBar />
        </div>
    );
}
